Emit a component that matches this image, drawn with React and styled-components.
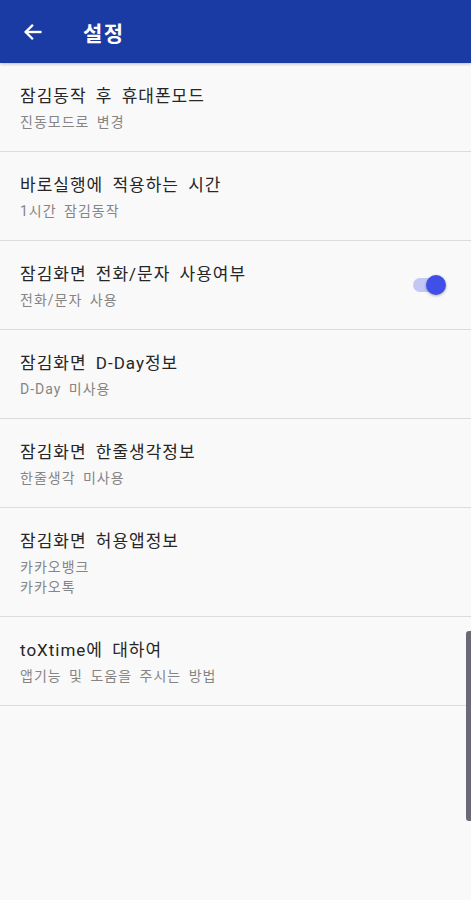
import styled, { createGlobalStyle } from 'styled-components';

const GlobalStyle = createGlobalStyle`
  html, body {
    margin: 0;
    padding: 0;
    background: #f9f9f9;
  }
  body {
    font-family: Roboto, "Noto Sans CJK KR", "Noto Sans", sans-serif;
  }
`;

const Screen = styled.div`
  position: relative;
  width: 471px;
  height: 900px;
  background: #f9f9f9;
  overflow: hidden;
`;

const AppBar = styled.header`
  display: flex;
  align-items: center;
  height: 63px;
  padding: 0 0 0 21px;
  background: #1a3ba3;
  box-shadow: 0 1px 3px rgba(0, 0, 0, 0.25);
  box-sizing: border-box;
`;

const BackButton = styled.div`
  display: flex;
  align-items: center;
  justify-content: center;
  width: 24px;
  height: 24px;
  margin-right: 38px;
`;

const Title = styled.h1`
  margin: 0;
  color: #ffffff;
  font-size: 21px;
  font-weight: 700;
  letter-spacing: 1.5px;
`;

const List = styled.div`
  display: flex;
  flex-direction: column;
`;

const Row = styled.div`
  display: flex;
  align-items: center;
  justify-content: space-between;
  min-height: ${p => p.$tall ? 108 : 88}px;
  padding: 0 26px 0 20px;
  border-bottom: 1px solid #dcdcdc;
`;

const Texts = styled.div`
  display: flex;
  flex-direction: column;
`;

const Label = styled.div`
  color: #262626;
  font-size: 17px;
  line-height: 26px;
  letter-spacing: 1px;
  word-spacing: 4px;
`;

const SubGroup = styled.div`
  display: flex;
  flex-direction: column;
  margin-top: 3px;
`;

const Sub = styled.div`
  color: #858585;
  font-size: 14px;
  line-height: 20px;
  letter-spacing: 1px;
  word-spacing: 3px;
`;

const Track = styled.div`
  position: relative;
  width: 32px;
  height: 14px;
  border-radius: 7px;
  background: #c3c7f4;
`;

const Thumb = styled.div`
  position: absolute;
  top: -3px;
  right: -1px;
  width: 20px;
  height: 20px;
  border-radius: 50%;
  background: #3f4fe8;
  box-shadow: 0 1px 3px rgba(0, 0, 0, 0.3);
`;

const ScrollThumb = styled.div`
  position: absolute;
  right: 0;
  top: 631px;
  width: 5px;
  height: 190px;
  background: #6a6a76;
  border-radius: 3px 0 0 3px;
`;

const items = [
  { label: '잠김동작 후 휴대폰모드', sub: ['진동모드로 변경'] },
  { label: '바로실행에 적용하는 시간', sub: ['1시간 잠김동작'] },
  { label: '잠김화면 전화/문자 사용여부', sub: ['전화/문자 사용'], toggle: true },
  { label: '잠김화면 D-Day정보', sub: ['D-Day 미사용'] },
  { label: '잠김화면 한줄생각정보', sub: ['한줄생각 미사용'] },
  { label: '잠김화면 허용앱정보', sub: ['카카오뱅크', '카카오톡'] },
  { label: 'toXtime에 대하여', sub: ['앱기능 및 도움을 주시는 방법'] },
];

const App = () => {
  return (
    <Screen>
      <GlobalStyle />
      <AppBar>
        <BackButton>
          <svg width="22" height="22" viewBox="0 0 24 24" fill="none" stroke="#fff" strokeWidth="2.6" strokeLinecap="square">
            <path d="M20 12H5" />
            <path d="M11 5l-7 7 7 7" />
          </svg>
        </BackButton>
        <Title>설정</Title>
      </AppBar>
      <List>
        {items.map(item => (
          <Row key={item.label} $tall={item.sub.length > 1}>
            <Texts>
              <Label>{item.label}</Label>
              <SubGroup>
                {item.sub.map(s => <Sub key={s}>{s}</Sub>)}
              </SubGroup>
            </Texts>
            {item.toggle && (
              <Track>
                <Thumb />
              </Track>
            )}
          </Row>
        ))}
      </List>
      <ScrollThumb />
    </Screen>
  );
};

export default App;
